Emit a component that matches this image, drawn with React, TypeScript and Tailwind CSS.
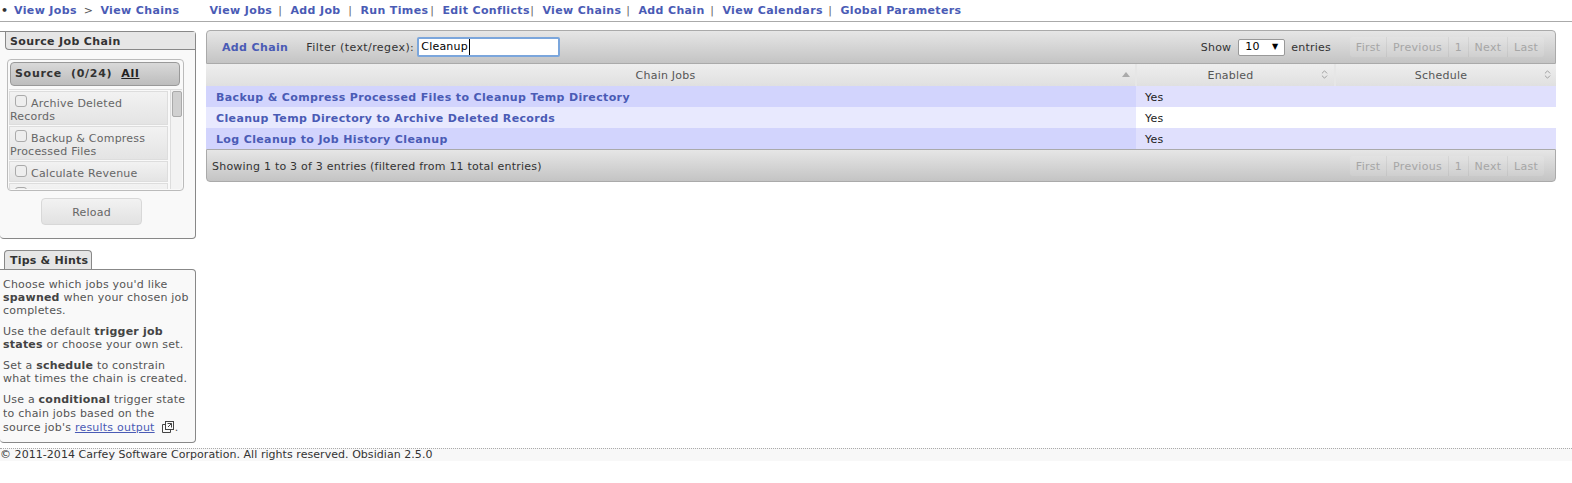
import { ChevronsUpDown } from "lucide-react"

const navLinks = [
  { label: "View Jobs", slot: "w-[81px]" },
  { label: "Add Job", slot: "w-[70px]" },
  { label: "Run Times", slot: "w-[82px]" },
  { label: "Edit Conflicts", slot: "w-[100px]" },
  { label: "View Chains", slot: "w-[96px]" },
  { label: "Add Chain", slot: "w-[84px]" },
  { label: "View Calendars", slot: "w-[118px]" },
]
const sourceJobs = ["Archive Deleted Records", "Backup & Compress Processed Files", "Calculate Revenue", "Cleanup Temp Directory"]
const rows = [
  "Backup & Compress Processed Files to Cleanup Temp Directory",
  "Cleanup Temp Directory to Archive Deleted Records",
  "Log Cleanup to Job History Cleanup",
]
const pages = ["First", "Previous", "1", "Next", "Last"]

function Pager() {
  return (
    <div className="flex h-[20px] w-[194px] rounded-[3px] bg-white/10 text-[11px] leading-[21px] tracking-[0.3px] text-[#a6a6a6]">
      {pages.map((p) => (
        <span key={p} className="flex-auto border-r border-black/5 text-center last:border-r-0">
          {p}
        </span>
      ))}
    </div>
  )
}

function SortIcon() {
  return <ChevronsUpDown className="h-[11px] w-[11px] text-[#999]" strokeWidth={2} />
}

export default function App() {
  return (
    <div className="h-[483px] w-[1572px] overflow-hidden bg-white font-['DejaVu_Sans','Liberation_Sans',sans-serif] text-[11px] tracking-[0.22px] text-[#444]">
      {/* top nav */}
      <div className="flex h-[22px] items-center border-b border-[#aaa] pt-[1px] text-[11px] font-bold tracking-[0.36px] text-[#4a5bb5]">
        <span className="ml-[1px] w-[13px] text-[#333]">•</span>
        <a>View Jobs</a>
        <span className="mx-[7px] font-normal text-[#555]">&gt;</span>
        <a>View Chains</a>
        <div className="ml-[30px] flex">
          {navLinks.map((l) => (
            <span key={l.label} className={`flex justify-between pr-[8px] ${l.slot}`}>
              <a className="whitespace-nowrap">{l.label}</a>
              <span className="font-normal text-[#666]">|</span>
            </span>
          ))}
          <a>Global Parameters</a>
        </div>
      </div>

      <div className="flex">
        {/* sidebar */}
        <div className="w-[196px] shrink-0">
          <div className="mt-[9px] h-[208px] rounded-r-[4px] rounded-b-[4px] border border-l-0 border-[#888] bg-[#f9f9f9]">
            <div className="ml-[5px] h-[18px] rounded-bl-[4px] border-b border-l border-[#888] bg-[#e6e6e6] pl-[4px] pt-[1px] text-[11px] font-bold leading-[18px] tracking-[0.36px] text-[#333]">
              Source Job Chain
            </div>
            <div className="ml-[7px] mt-[9px] h-[132px] w-[177px] rounded-[4px] border border-[#bbb] bg-[#f9f9f9] p-[1px]">
              <div className="mx-[1px] mt-[1px] flex h-[24px] w-[170px] items-center rounded-[4px] border border-[#999] bg-gradient-to-b from-[#d9d9d9] to-[#bdbdbd] pl-[4px] pt-[1px] text-[11px] font-bold tracking-[0.7px] text-[#333]">
                Source&nbsp;&nbsp;(0/24)&nbsp;&nbsp;<span className="text-[#222] underline">All</span>
              </div>
              <div className="mt-[3px] flex h-[100px] overflow-hidden border-t border-[#ddd]">
                <div className="w-[159px] shrink-0 pt-[1px]">
                  {sourceJobs.map((j) => (
                    <div key={j} className="mb-[1px] border border-[#ddd] bg-gradient-to-b from-[#f2f2f2] to-[#e4e4e4] pb-[1px] pt-[3px] text-[11px] leading-[13px] text-[#666]">
                      <span className="ml-[5px] mr-[4px] inline-block h-[12px] w-[12px] rounded-[3px] border border-[#aaa] bg-[#eee]" />
                      {j}
                    </div>
                  ))}
                </div>
                <div className="ml-[2px] w-[15px] border-l border-[#ddd] bg-[#f3f3f3] p-[1px]">
                  <div className="h-[26px] w-[10px] rounded-[2px] border border-[#aaa] bg-[#d0d0d0]" />
                </div>
              </div>
            </div>
            <button className="ml-[41px] mt-[7px] block h-[27px] w-[101px] rounded-[4px] border border-[#d8d8d8] bg-gradient-to-b from-[#f2f2f2] to-[#e2e2e2] pt-[3px] text-[11px] text-[#666]">
              Reload
            </button>
          </div>

          <div className="ml-[4px] mt-[11px] h-[19px] w-[88px] rounded-t-[4px] border border-b-0 border-[#888] bg-[#e6e6e6] pl-[5px] pt-[1px] font-bold leading-[18px] text-[#333]">
            Tips &amp; Hints
          </div>
          <div className="flex h-[174px] flex-col gap-[8px] rounded-r-[4px] rounded-b-[4px] border border-l-0 border-[#888] bg-[#f9f9f9] pl-[3px] pr-[3px] pt-[8px] leading-[13px] text-[#555]">
            <p>Choose which jobs you'd like <b className="text-[#444]">spawned</b> when your chosen job completes.</p>
            <p>Use the default <b className="text-[#444]">trigger job states</b> or choose your own set.</p>
            <p>Set a <b className="text-[#444]">schedule</b> to constrain what times the chain is created.</p>
            <p className="leading-[14px]">
              Use a <b className="text-[#444]">conditional</b> trigger state to chain jobs based on the source job's{" "}
              <a className="text-[#4a5bb5] underline">results output</a>
              <svg className="ml-[7px] mr-[1px] inline-block h-[12px] w-[12px] align-[-2px]" viewBox="0 0 12 12" fill="none" stroke="#444">
                <rect x="3.5" y="0.5" width="8" height="8" />
                <path d="M3.5 3.5H0.5V11.5H8.5V8.5" />
                <path d="M5.5 2.5H9.5V6.5M9.5 2.5L6 6" />
              </svg>
              .
            </p>
          </div>
        </div>

        {/* chains table */}
        <div className="ml-[10px] mt-[8px] w-[1350px]">
          <div className="flex h-[34px] items-center rounded-t-[4px] border border-[#aaa] bg-gradient-to-b from-[#e6e6e6] to-[#c4c4c4] text-[#333]">
            <a className="ml-[15px] pt-[2px] font-bold tracking-[0.36px] text-[#4a5bb5]">Add Chain</a>
            <span className="ml-[18px] pt-[2px] tracking-[0.42px]">Filter (text/regex):</span>
            <div className="ml-[3px] flex h-[20px] w-[143px] items-center rounded-[2px] border-2 border-[#7ba6dc] bg-white pl-[2px] text-black">
              <span className="border-r border-black pr-[1px]">Cleanup</span>
            </div>
            <span className="ml-auto pt-[2px]">Show</span>
            <span className="ml-[7px] mr-[6px] flex h-[17px] w-[47px] items-center justify-between rounded-[2px] border border-[#999] bg-white px-[6px] text-black">
              10<span className="text-[8px]">▼</span>
            </span>
            <span className="pt-[2px]">entries</span>
            <div className="ml-[19px] mr-[11px]"><Pager /></div>
          </div>

          <table className="w-full table-fixed border-collapse">
            <thead>
              <tr className="h-[22px] text-[#555]">
                <th className="relative w-[930px] bg-gradient-to-b from-[#eee] to-[#e0e0e0] pr-[10px] pt-[2px] font-normal">
                  Chain Jobs
                  <span className="absolute right-[5px] top-[8px] h-0 w-0 border-x-[4px] border-b-[5px] border-x-transparent border-b-[#aaa]" />
                </th>
                <th className="relative w-[199px] border-x-2 border-[#e6e6e6] bg-gradient-to-b from-[#eee] to-[#e0e0e0] pr-[10px] pt-[2px] font-normal">
                  Enabled
                  <span className="absolute right-[4px] top-[5px]"><SortIcon /></span>
                </th>
                <th className="relative bg-gradient-to-b from-[#eee] to-[#e0e0e0] pr-[10px] pt-[2px] font-normal">
                  Schedule
                  <span className="absolute right-[3px] top-[5px]"><SortIcon /></span>
                </th>
              </tr>
            </thead>
            <tbody>
              {rows.map((r, i) => (
                <tr key={r} className={`h-[21px] ${i % 2 === 0 ? "bg-[#e0e0fd]" : "bg-white"}`}>
                  <td className={`pl-[10px] pt-[3px] font-bold tracking-[0.36px] text-[#4a5bb5] ${i % 2 === 0 ? "bg-[#d2d4fd]" : "bg-[#e8e9fe]"}`}>{r}</td>
                  <td className="pl-[9px] pt-[3px] text-[#222]">Yes</td>
                  <td />
                </tr>
              ))}
            </tbody>
          </table>

          <div className="flex h-[33px] items-center justify-between rounded-b-[4px] border border-[#aaa] bg-gradient-to-b from-[#e6e6e6] to-[#c4c4c4] pl-[5px] pr-[11px] pt-[1px] text-[#333]">
            <span className="pt-[2px]">Showing 1 to 3 of 3 entries (filtered from 11 total entries)</span>
            <Pager />
          </div>
        </div>
      </div>

      {/* footer */}
      <div className="mt-[5px] h-[13px] border-t border-dotted border-[#aaa] bg-[#f8f8f8] text-[11px] leading-[11px] tracking-[0.05px] text-[#333]">
        © 2011-2014 Carfey Software Corporation. All rights reserved. Obsidian 2.5.0
      </div>
    </div>
  )
}
